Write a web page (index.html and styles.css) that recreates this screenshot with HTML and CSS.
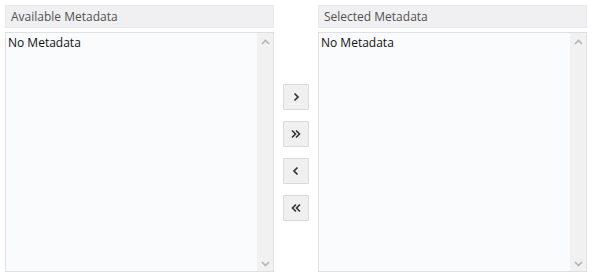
FILE: index.html
```
<!DOCTYPE html>
<html>
<head>
<meta charset="utf-8">
<link rel="stylesheet" href="styles.css">
</head>
<body>
<div class="shuttle">
  <div class="panel">
    <div class="header">Available Metadata</div>
    <div class="list">
      <div class="items"><div class="item">No Metadata</div></div>
      <div class="scroll">
        <svg class="arrow" width="9" height="6" viewBox="0 0 9 6"><path d="M1 5 L4.5 1.5 L8 5" fill="none" stroke="#b4b4b4" stroke-width="1.6"/></svg>
        <svg class="arrow" width="9" height="6" viewBox="0 0 9 6"><path d="M1 1 L4.5 4.5 L8 1" fill="none" stroke="#b4b4b4" stroke-width="1.6"/></svg>
      </div>
    </div>
  </div>
  <div class="buttons">
    <button class="btn"><svg width="10" height="10" viewBox="0 0 10 10"><path d="M3.5 1.5 L7 5 L3.5 8.5" fill="none" stroke="#333" stroke-width="1.7"/></svg></button>
    <button class="btn"><svg width="12" height="10" viewBox="0 0 12 10"><path d="M2 1.5 L5.5 5 L2 8.5 M6 1.5 L9.5 5 L6 8.5" fill="none" stroke="#333" stroke-width="1.6"/></svg></button>
    <button class="btn"><svg width="10" height="10" viewBox="0 0 10 10"><path d="M6.5 1.5 L3 5 L6.5 8.5" fill="none" stroke="#333" stroke-width="1.7"/></svg></button>
    <button class="btn"><svg width="12" height="10" viewBox="0 0 12 10"><path d="M6 1.5 L2.5 5 L6 8.5 M10 1.5 L6.5 5 L10 8.5" fill="none" stroke="#333" stroke-width="1.6"/></svg></button>
  </div>
  <div class="panel">
    <div class="header">Selected Metadata</div>
    <div class="list">
      <div class="items"><div class="item">No Metadata</div></div>
      <div class="scroll">
        <svg class="arrow" width="9" height="6" viewBox="0 0 9 6"><path d="M1 5 L4.5 1.5 L8 5" fill="none" stroke="#b4b4b4" stroke-width="1.6"/></svg>
        <svg class="arrow" width="9" height="6" viewBox="0 0 9 6"><path d="M1 1 L4.5 4.5 L8 1" fill="none" stroke="#b4b4b4" stroke-width="1.6"/></svg>
      </div>
    </div>
  </div>
</div>
</body>
</html>
```
FILE: styles.css
```
html, body {
  margin: 0;
  padding: 0;
  background: #ffffff;
}
body {
  font-family: "Open Sans", "Noto Sans", sans-serif;
  font-size: 12px;
  width: 596px;
  height: 280px;
}
.shuttle {
  display: flex;
  padding: 5px 8px 8px 5px;
  height: 280px;
  box-sizing: border-box;
}
.panel {
  width: 269px;
  display: flex;
  flex-direction: column;
  gap: 4px;
}
.header {
  height: 21px;
  background: #f0f0f2;
  border: 1px solid #e8e8ea;
  color: #505050;
  padding-left: 5px;
  line-height: 21px;
  box-sizing: content-box;
}
.list {
  flex: 1;
  display: flex;
  border: 1px solid #e0e0e4;
  background: #fafbfd;
}
.items {
  flex: 1;
  padding: 2px 2px;
}
.item {
  color: #111;
  font-size: 12px;
  line-height: 16px;
}
.scroll {
  width: 16px;
  background: #f1f1f1;
  display: flex;
  flex-direction: column;
  justify-content: space-between;
  align-items: center;
  padding: 6px 0 4px;
}
.buttons {
  width: 44px;
  display: flex;
  flex-direction: column;
  align-items: center;
  gap: 11px;
  padding-top: 79px;
}
.btn {
  width: 26px;
  height: 26px;
  padding: 0;
  margin: 0;
  background: #f0f0f0;
  border: 1px solid #dadada;
  border-radius: 1px;
  display: flex;
  align-items: center;
  justify-content: center;
}
```
